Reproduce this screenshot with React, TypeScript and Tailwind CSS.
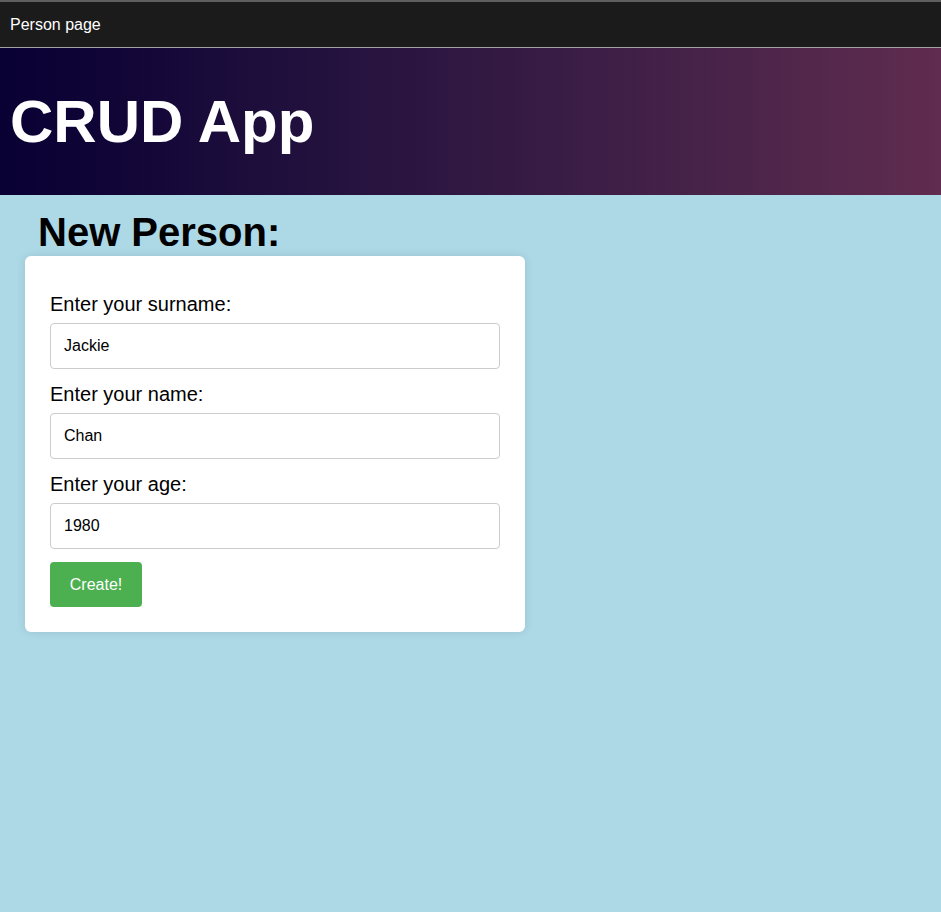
export default function App() {
  const fields = [
    { label: "Enter your surname:", value: "Jackie" },
    { label: "Enter your name:", value: "Chan" },
    { label: "Enter your age:", value: "1980" },
  ]

  return (
    <div className="min-h-[912px] bg-[#add8e6] font-['Liberation_Sans',Arial,sans-serif]">
      {/* Title bar */}
      <div className="border-t-2 border-t-[#5f5f5f] border-b border-b-[#a3a3a3] bg-[#1b1b1b] pt-px">
        <div className="flex h-[44px] items-center px-[10px] text-base text-white">Person page</div>
      </div>

      {/* Header */}
      <div className="flex h-[147px] items-center bg-gradient-to-r from-[#090033] to-[#602c4f] px-[10px]">
        <h1 className="text-[60px] font-bold leading-[69px] text-white">CRUD App</h1>
      </div>

      {/* Form */}
      <div className="px-[25px] pt-[14px]">
        <h2 className="pl-[13px] text-[40px] font-bold leading-[46px] text-black">New Person:</h2>
        <div className="mt-px w-[500px] rounded-[6px] bg-white px-[25px] pt-[37px] pb-[25px] shadow-[0_0_10px_rgba(0,0,0,0.1)]">
          {fields.map((f) => (
            <div key={f.label} className="mb-[14px]">
              <label className="mb-[7px] block text-[20px] leading-[23px] text-black">{f.label}</label>
              <input
                defaultValue={f.value}
                className="box-border block h-[46px] w-full rounded-[4px] border border-[#cccccc] px-[13px] text-base text-black outline-none"
              />
            </div>
          ))}
          <button className="-mt-px h-[45px] w-[92px] rounded-[4px] bg-[#4caf50] text-base text-white">Create!</button>
        </div>
      </div>
    </div>
  )
}
